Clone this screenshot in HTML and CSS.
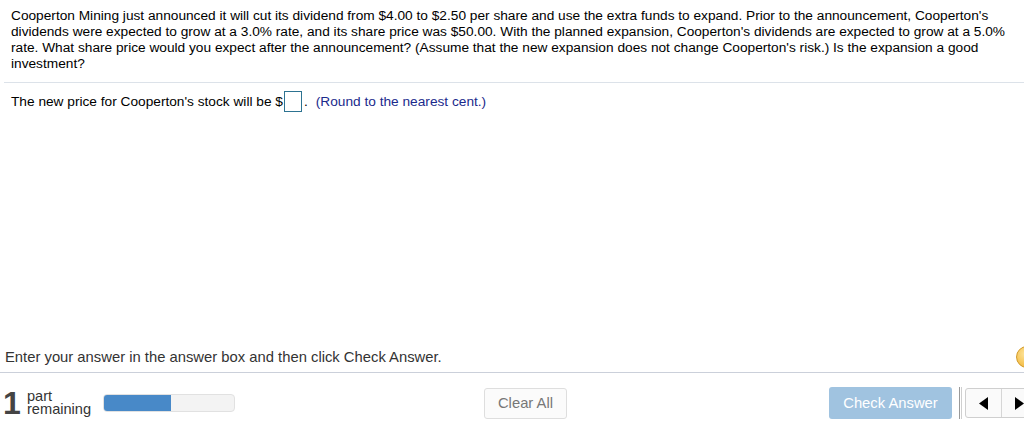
FILE: index.html
```html
<!DOCTYPE html>
<html>
<head>
<meta charset="utf-8">
<link rel="stylesheet" href="styles.css">
</head>
<body>
<div class="page">
  <div class="question">Cooperton Mining just announced it will cut its dividend from $4.00 to $2.50 per share and use the extra funds to expand. Prior to the announcement, Cooperton's dividends were expected to grow at a 3.0% rate, and its share price was $50.00. With the planned expansion, Cooperton's dividends are expected to grow at a 5.0% rate. What share price would you expect after the announcement? (Assume that the new expansion does not change Cooperton's risk.) Is the expansion a good investment?</div>
  <div class="sep"></div>
  <div class="answer">
    <span>The new price for Cooperton's stock will be $</span><span class="box"></span><span class="dot">.</span><span class="hint">(Round to the nearest cent.)</span>
  </div>
  <div class="spacer"></div>
  <div class="instr">
    <span>Enter your answer in the answer box and then click Check Answer.</span>
    <span class="orb"></span>
  </div>
  <div class="bar">
    <span class="num">1</span>
    <span class="parts"><span class="pl">part</span><span class="pl">remaining</span></span>
    <span class="progress"><span class="fill"></span></span>
    <span class="btn clear">Clear All</span>
    <span class="btn check">Check Answer</span>
    <span class="vsep"></span>
    <span class="nav">
      <span class="navbtn"><svg width="9" height="13" viewBox="0 0 9 13"><polygon points="9,0 9,13 0,6.5" fill="#000"/></svg></span>
      <span class="navbtn"><svg width="9" height="13" viewBox="0 0 9 13"><polygon points="0,0 0,13 9,6.5" fill="#000"/></svg></span>
    </span>
  </div>
</div>
</body>
</html>
```

FILE: styles.css
```css
html, body {
  margin: 0;
  padding: 0;
  background: #fff;
}
body {
  width: 1024px;
  height: 429px;
  overflow: hidden;
  font-family: "Liberation Sans", Arial, Helvetica, sans-serif;
}
.page {
  display: flex;
  flex-direction: column;
  height: 429px;
}
.question {
  padding: 8px 12px 0 11px;
  font-size: 13.7px;
  line-height: 16px;
  color: #000;
}
.sep {
  margin: 10px 0 0 4px;
  height: 1px;
  background: #dce2e9;
}
.answer {
  display: flex;
  align-items: center;
  margin-top: 8px;
  padding-left: 11px;
  font-size: 13.7px;
  color: #000;
  height: 21px;
}
.box {
  display: inline-block;
  width: 16px;
  height: 19px;
  border: 1px solid #2d7391;
  margin-left: 1px;
}
.dot {
  margin-left: 2px;
}
.hint {
  margin-left: 8px;
  color: #1b2a8c;
}
.spacer {
  flex: 1;
}
.instr {
  display: flex;
  align-items: center;
  justify-content: space-between;
  height: 22px;
  padding-left: 5px;
  margin-bottom: 4px;
  font-size: 14.8px;
  color: #333;
}
.orb {
  flex-shrink: 0;
  width: 20px;
  height: 20px;
  border-radius: 50%;
  border: 1px solid #d29a2a;
  background: radial-gradient(circle at 40% 35%, #fde39a 0%, #f6c658 55%, #e9a93a 100%);
  margin-right: -14px;
}
.bar {
  display: flex;
  align-items: center;
  box-sizing: border-box;
  height: 57px;
  padding: 4px 0 0 3px;
  border-top: 1px solid #cbd0da;
}
.bar > * {
  flex-shrink: 0;
}
.num {
  font-size: 32px;
  font-weight: bold;
  color: #444;
  line-height: 32px;
  width: 14px;
}
.parts {
  display: flex;
  flex-direction: column;
  margin-left: 10px;
  width: 66px;
  font-size: 14.6px;
  color: #333;
}
.pl {
  line-height: 13px;
  height: 13px;
}
.progress {
  margin-left: 10px;
  width: 130px;
  height: 16px;
  border: 1px solid #e1e1e1;
  border-radius: 4px;
  background: #f3f3f3;
  overflow: hidden;
  display: flex;
}
.fill {
  width: 67px;
  background: #4889c8;
}
.btn {
  box-sizing: border-box;
  display: flex;
  align-items: center;
  justify-content: center;
  font-size: 14.8px;
  border-radius: 3px;
}
.clear {
  margin-left: 249px;
  width: 83px;
  height: 31px;
  border: 1px solid #dedede;
  background: #fbfbfb;
  color: #777;
}
.check {
  margin-left: 262px;
  width: 123px;
  height: 32px;
  background: #a0c3e0;
  color: #fff;
}
.vsep {
  margin-left: 7px;
  width: 1px;
  height: 32px;
  border-left: 1px solid #9a9a9a;
  border-right: 1px solid #cfcfcf;
}
.nav {
  margin-left: 3px;
  display: flex;
  height: 30px;
  box-sizing: border-box;
  border: 1px solid #cfcfcf;
  border-radius: 3px;
  background: #fafafa;
}
.navbtn {
  display: flex;
  align-items: center;
  justify-content: center;
  width: 35px;
}
.navbtn + .navbtn {
  border-left: 1px solid #d6d6d6;
}
```
